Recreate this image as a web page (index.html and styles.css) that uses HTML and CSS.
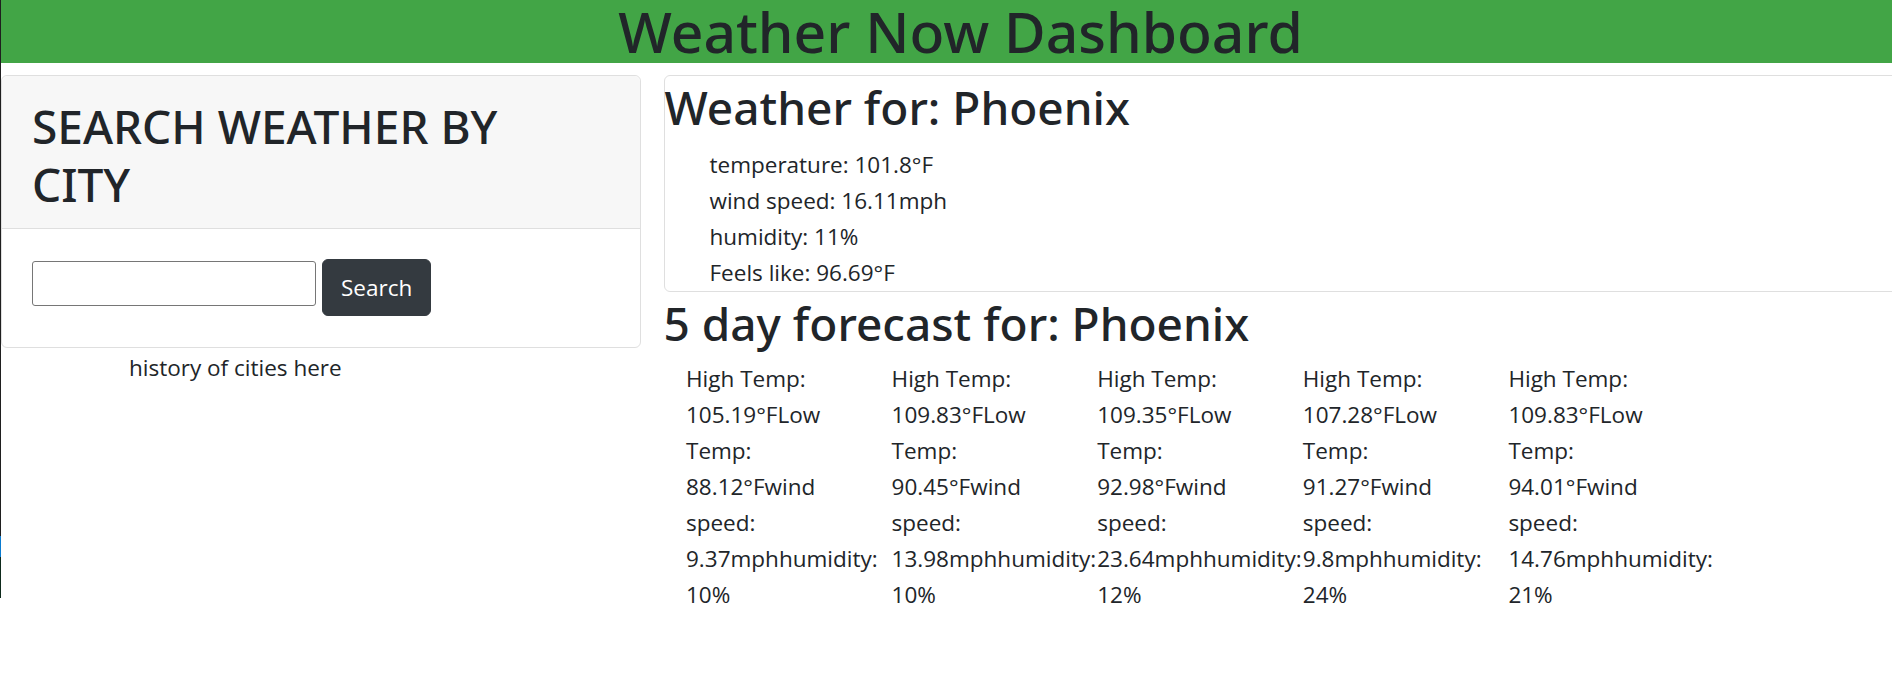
FILE: index.html
```html
<!DOCTYPE html>
<html lang="en">
<head>
<meta charset="utf-8">
<title>Weather Now Dashboard</title>
<link rel="stylesheet" href="styles.css">
</head>
<body>
<div class="frame">
  <div class="edge"></div>
  <div class="page">
    <header class="topbar">
      <h1 class="site-title">Weather Now Dashboard</h1>
    </header>
    <div class="layout">
      <aside class="side">
        <div class="card">
          <div class="card-header">
            <h2 class="heading heading-narrow">SEARCH WEATHER BY CITY</h2>
          </div>
          <div class="card-body">
            <form class="search" onsubmit="return false;">
              <input class="search-input" type="text" aria-label="City">
              <button class="btn-dark" type="submit">Search</button>
            </form>
          </div>
        </div>
        <p class="history">history of cities here</p>
      </aside>
      <main class="main">
        <section class="card current">
          <h2 class="heading heading-spaced">Weather for: Phoenix</h2>
          <ul class="stats">
            <li>temperature: 101.8°F</li>
            <li>wind speed: 16.11mph</li>
            <li>humidity: 11%</li>
            <li>Feels like: 96.69°F</li>
          </ul>
        </section>
        <h2 class="heading heading-spaced">5 day forecast for: Phoenix</h2>
        <div class="forecast">
          <div class="day">High Temp: 105.19°FLow Temp: 88.12°Fwind speed: 9.37mphhumidity: 10%</div>
          <div class="day">High Temp: 109.83°FLow Temp: 90.45°Fwind speed: 13.98mphhumidity: 10%</div>
          <div class="day">High Temp: 109.35°FLow Temp: 92.98°Fwind speed: 23.64mphhumidity: 12%</div>
          <div class="day">High Temp: 107.28°FLow Temp: 91.27°Fwind speed: 9.8mphhumidity: 24%</div>
          <div class="day">High Temp: 109.83°FLow Temp: 94.01°Fwind speed: 14.76mphhumidity: 21%</div>
        </div>
      </main>
    </div>
  </div>
</div>
</body>
</html>
```

FILE: styles.css
```css
* {
  box-sizing: border-box;
}

html, body {
  margin: 0;
  padding: 0;
  background: #ffffff;
  overflow: hidden;
}

body {
  font-family: "Open Sans", "Noto Sans", sans-serif;
  font-size: 22.5px;
  line-height: 36px;
  color: #212529;
}

.frame {
  display: flex;
  align-items: flex-start;
  width: 1892px;
  overflow-x: clip;
}

.edge {
  flex: none;
  width: 1px;
  height: 598px;
  background: linear-gradient(to bottom, #1f1f1f 0, #1f1f1f 536px, #0a7bd0 536px, #0a7bd0 557px, #0e2a1c 557px, #0e2a1c 598px);
}

.page {
  flex: none;
  width: 1919px;
}

.topbar {
  height: 63px;
  margin-bottom: 12px;
  background: #42a546;
  display: flex;
  justify-content: center;
  align-items: flex-start;
}

.site-title {
  margin: 0;
  font-family: "Noto Sans", "Open Sans", sans-serif;
  font-size: 57px;
  line-height: 63px;
  font-weight: 500;
  color: #212529;
}

.layout {
  display: flex;
  align-items: flex-start;
}

.side {
  flex: none;
  width: 640px;
}

.card {
  border: 1px solid #dfdfdf;
  border-radius: 6px;
  background: #ffffff;
}

.card-header {
  padding: 18px 30px 15px;
  background: #f7f7f7;
  border-bottom: 1px solid #dfdfdf;
  border-radius: 6px 6px 0 0;
}

.heading {
  margin: 0;
  padding-top: 3px;
  font-family: "Noto Sans", "Open Sans", sans-serif;
  font-size: 46px;
  line-height: 57.6px;
  font-weight: 500;
}

.heading-narrow {
  max-width: 530px;
  line-height: 58px;
}

.heading-spaced {
  margin-bottom: 9px;
}

.card-body {
  padding: 30px 30px 31px;
}

.search {
  display: flex;
  align-items: flex-start;
  gap: 6px;
  margin: 0;
}

.search-input {
  width: 284px;
  height: 45px;
  margin-top: 2px;
  padding: 2px 4px;
  border: 1px solid #767676;
  border-radius: 3px;
  font-family: inherit;
  font-size: 20px;
  background: #ffffff;
}

.btn-dark {
  height: 57px;
  padding: 0 18px;
  border: 1px solid #343a40;
  border-radius: 6px;
  background: #343a40;
  color: #ffffff;
  font-family: inherit;
  font-size: 22.5px;
  line-height: 36px;
}

.history {
  margin: 2px 0 0;
  padding-left: 128px;
}

.main {
  flex: none;
  width: 1279px;
  padding: 0 22.5px;
}

.stats {
  margin: 0;
  padding-top: 1px;
  padding-left: 45px;
  list-style: none;
}

.forecast {
  display: grid;
  grid-template-columns: repeat(5, 205.6px);
  margin-top: 3px;
}

.day {
  padding: 0 22.5px;
}
```
